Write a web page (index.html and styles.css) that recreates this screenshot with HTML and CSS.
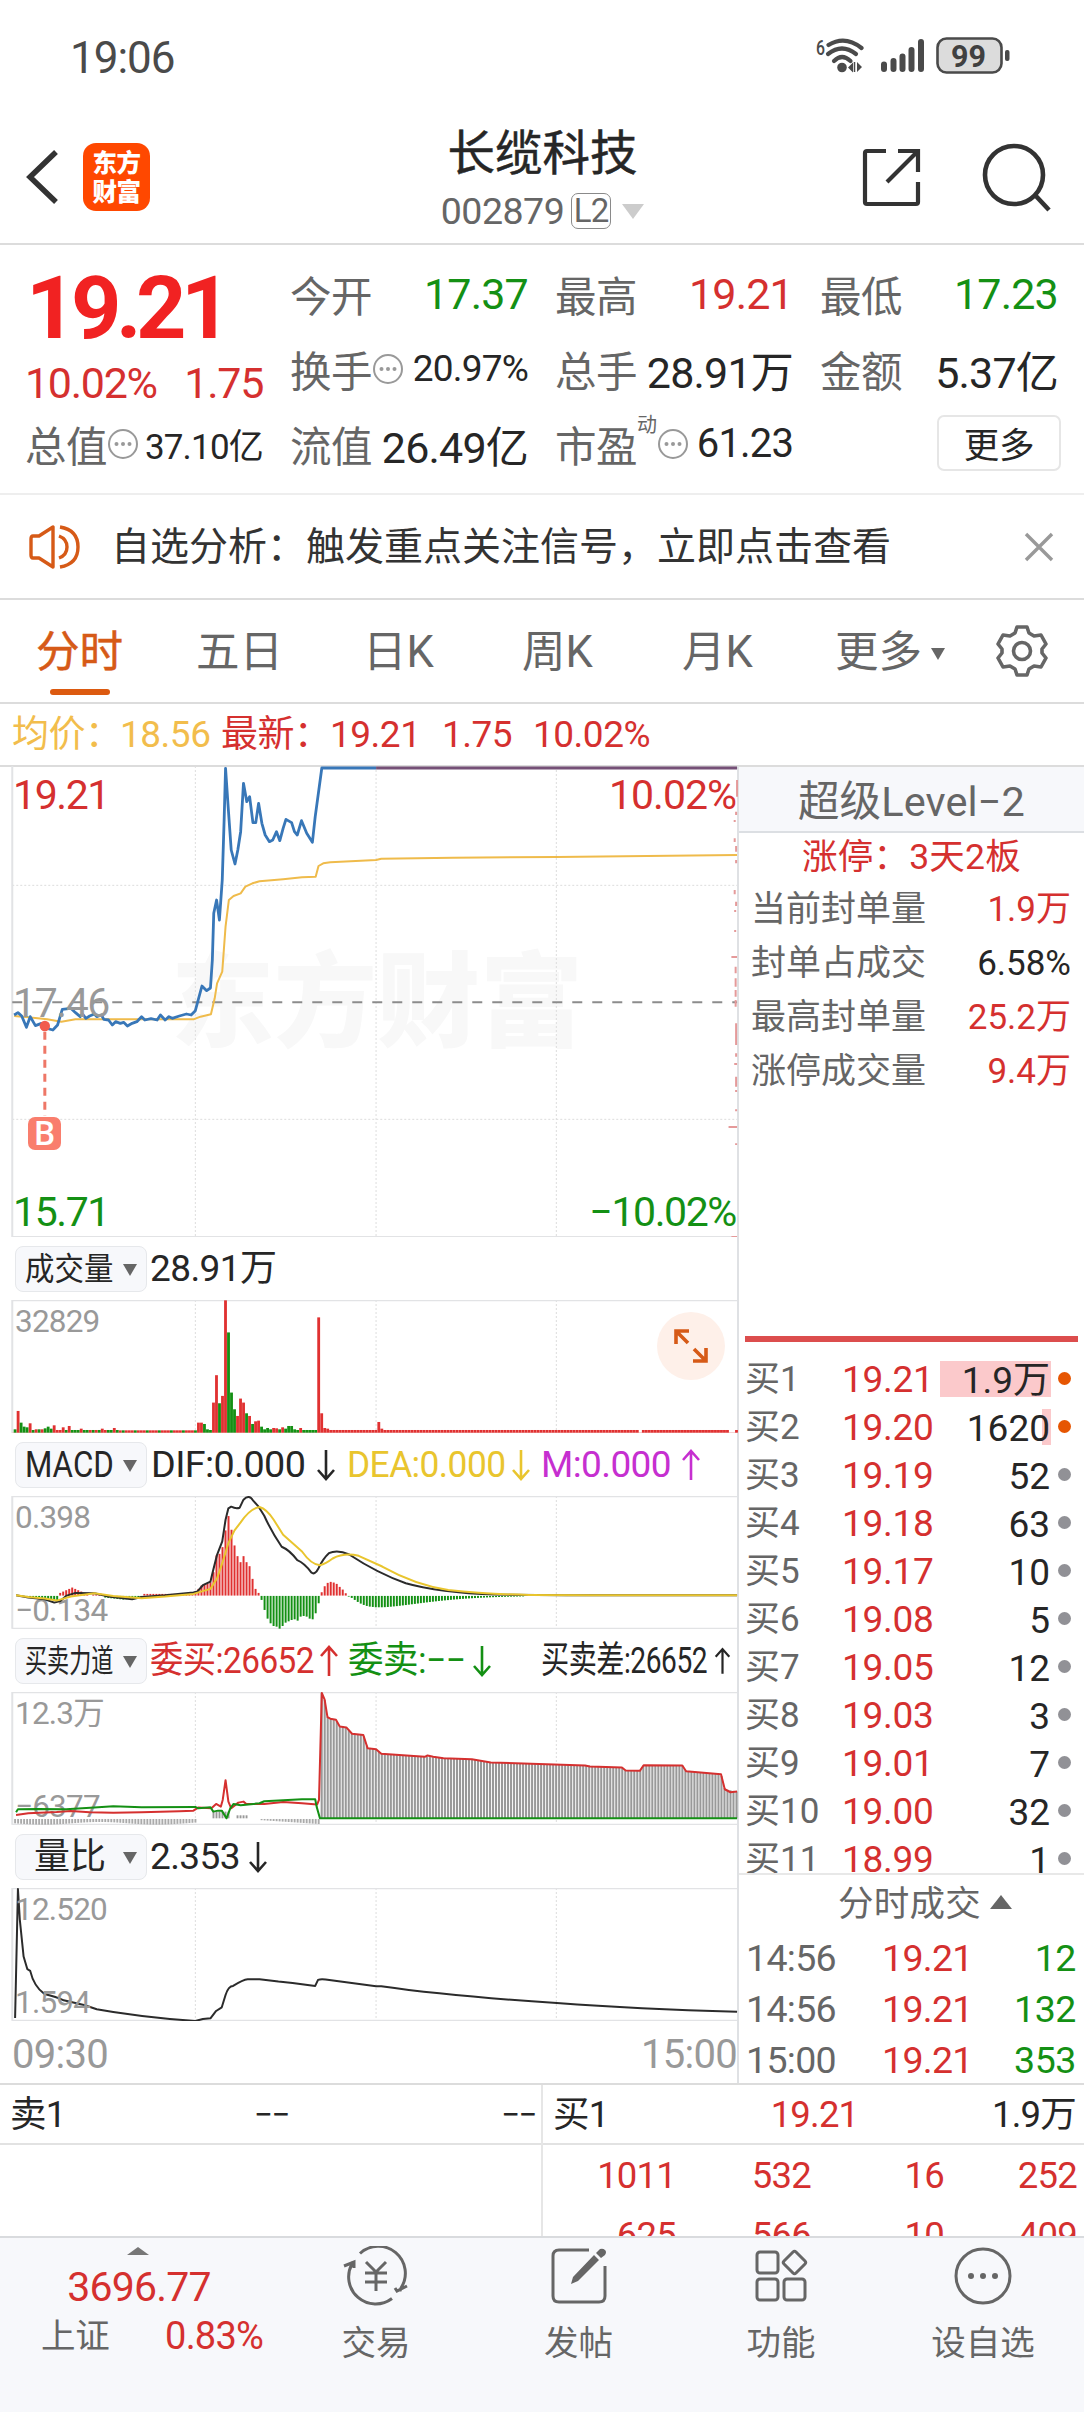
FILE: index.html
```html
<!DOCTYPE html>
<html lang="zh-CN">
<head>
<meta charset="utf-8">
<title>长缆科技 002879</title>
<link rel="stylesheet" href="styles.css">
</head>
<body>
<svg class="defs" width="0" height="0" aria-hidden="true">
  <symbol id="down" viewBox="0 0 20 32"><path d="M10 1V30M2 21L10 30L18 21" fill="none" stroke="currentColor" stroke-width="2.6"/></symbol>
  <symbol id="up" viewBox="0 0 20 32"><path d="M10 31V2M2 11L10 2L18 11" fill="none" stroke="currentColor" stroke-width="2.6"/></symbol>
  <symbol id="info" viewBox="0 0 32 32"><circle cx="16" cy="16" r="14" fill="none" stroke="#999" stroke-width="2"/><g fill="#999"><circle cx="9.5" cy="16" r="2"/><circle cx="16" cy="16" r="2"/><circle cx="22.500" cy="16" r="2"/></g></symbol>
</svg>

<header class="status">
  <span class="clock">19:06</span>
  <svg class="status-icons" width="200" height="44" viewBox="0 0 200 44">
    <text x="2" y="20" font-size="21" font-weight="500" textLength="9" lengthAdjust="spacingAndGlyphs" fill="#4a4a4a">6</text>
    <g fill="none" stroke="#4a4a4a" stroke-width="4.200" stroke-linecap="round">
      <path d="M14.500 10Q31 0 47.500 13"/><path d="M14 19Q28 8 42 19"/><path d="M20 26Q28 18 36.500 26"/>
    </g>
    <circle cx="28" cy="32.500" r="4.800" fill="#4a4a4a"/>
    <path d="M34 32.500l5-5v10zM48 32l-5-5v10z" fill="#4a4a4a"/><path d="M40.500 27v10" stroke="#4a4a4a" stroke-width="1.500"/>
    <g stroke="#4a4a4a" stroke-width="6" stroke-linecap="round"><path d="M70 29.500V34M79.500 26V34M88.500 21.500V34M97.500 15V34M107 7V34"/></g>
    <rect x="123.500" y="3.500" width="64" height="34" rx="9" fill="#dcdcdc" stroke="#4a4a4a" stroke-width="2.600"/>
    <rect x="191" y="15" width="4.500" height="11" rx="2" fill="#4a4a4a"/>
    <text x="137" y="31.500" font-size="31" font-weight="700" textLength="35" lengthAdjust="spacingAndGlyphs" fill="#404040">99</text>
  </svg>
</header>

<nav class="titlebar">
  <svg class="back" width="36" height="60" viewBox="0 0 36 60"><path d="M32 5L6 30L32 55" fill="none" stroke="#333" stroke-width="5.500"/></svg>
  <div class="logo"><span>东方</span><span>财富</span></div>
  <div class="title">
    <h1>长缆科技</h1>
    <div class="code"><span>002879</span><b>L2</b><i></i></div>
  </div>
  <svg class="share" width="60" height="60" viewBox="0 0 60 60"><g fill="none" stroke="#333" stroke-width="4.200"><path d="M24 3H5Q3 3 3 5V54Q3 56 5 56H54Q56 56 56 54V34"/><path d="M36 3H56V24M55 4L25 34"/></g></svg>
  <svg class="search" width="70" height="70" viewBox="0 0 70 70"><g fill="none" stroke="#333" stroke-width="4.600"><circle cx="32" cy="32" r="29"/><path d="M53 52L67 67"/></g></svg>
</nav>

<section class="quote">
  <div class="col c1">
    <strong>19.21</strong>
    <p class="red row2"><span>10.02%</span><span>1.75</span></p>
    <p class="row3"><label>总值</label><svg width="32" height="32"><use href="#info"/></svg><em class="s36">37.10亿</em></p>
  </div>
  <div class="col">
    <p><label>今开</label><em class="green">17.37</em></p>
    <p><label>换手</label><svg width="32" height="32"><use href="#info"/></svg><em class="s37">20.97%</em></p>
    <p><label>流值</label><em>26.49亿</em></p>
  </div>
  <div class="col">
    <p><label>最高</label><em class="red">19.21</em></p>
    <p><label>总手</label><em>28.91万</em></p>
    <p class="pe"><label>市盈</label><sup>动</sup><svg width="32" height="32"><use href="#info"/></svg><em class="s40">61.23</em></p>
  </div>
  <div class="col">
    <p><label>最低</label><em class="green">17.23</em></p>
    <p><label>金额</label><em>5.37亿</em></p>
    <p class="end"><button>更多</button></p>
  </div>
</section>

<section class="notice">
  <svg width="54" height="46" viewBox="0 0 54 46"><g fill="none" stroke="#d65a17" stroke-width="3.400"><path d="M25 3V43L11 34H5Q3 34 3 31V15Q3 12 5 12H11Z" stroke-linejoin="round"/><path d="M31 12Q39 15 39 23T31 34"/><path d="M32 3Q50 6 50 23T32 43"/></g></svg>
  <span>自选分析：触发重点关注信号，立即点击查看</span>
  <svg class="close" width="30" height="30" viewBox="0 0 30 30"><path d="M2 2L28 28M28 2L2 28" stroke="#999" stroke-width="3.400"/></svg>
</section>

<nav class="tabs">
  <span class="on">分时</span><span>五日</span><span>日K</span><span>周K</span><span>月K</span><span>更多<i></i></span>
  <svg width="54" height="54" viewBox="0 0 54 54"><g fill="none" stroke="#666" stroke-width="3.600" stroke-linejoin="round"><path d="M22 3H32L34 9L39 12L46 11L51 20L47 25V29L51 34L46 43L39 42L34 45L32 51H22L20 45L15 42L8 43L3 34L7 29V25L3 20L8 11L15 12L20 9Z"/><circle cx="27" cy="27" r="8.500"/></g></svg>
</nav>

<section class="last">
  <span class="avg">均价：</span><span class="avg n1">18.56</span><span class="red n2">最新：</span><span class="red n3">19.21</span><span class="red n4">1.75</span><span class="red n5">10.02%</span>
</section>

<main class="board">
  <div class="charts">
    <div class="chart price">
      <div class="watermark">东方财富</div>
      <svg width="738" height="471" viewBox="0 18 1564 1413" preserveAspectRatio="none">
        <g class="grid"><path d="M414 18V1431M797 18V1431M1179 18V1431M26 376H1562M26 1078H1562"/></g>
        <path class="frame" d="M26 18V1431H1562"/>
        <path class="line dash" d="M26 727H1562"/>
        <polyline class="line yellow" points="30,768 60,772 100,778 130,785 160,778 410,778 425,770 447,763 455,715 460,670 471,635 478,500 485,420 495,408 510,400 520,380 535,370 550,364 600,358 640,352 669,350 675,318 685,310 700,307 797,300 808,296 960,293 1180,291 1562,285"/>
        <polyline class="line blue" points="30,765 38,758 46,768 56,802 64,770 75,797 88,790 100,805 112,810 122,795 132,748 150,745 160,758 170,770 175,762 182,775 190,768 200,762 205,770 215,765 220,778 230,780 238,795 245,785 255,790 262,787 270,798 280,790 290,785 300,770 307,780 320,776 333,780 340,765 350,780 358,770 365,775 380,768 395,762 405,765 414,752 420,720 428,678 438,692 446,684 450,600 453,460 459,420 465,480 471,360 475,180 478,25 484,150 490,270 498,312 504,270 510,215 516,70 523,125 529,110 536,188 542,188 548,130 555,190 562,225 571,245 578,240 586,215 593,242 600,205 606,178 618,188 624,215 630,225 639,182 650,220 662,247 668,170 682,24 797,24"/>
        <path class="line purple" d="M797 24H1562"/>
        <path class="line tick" d="M1562 60V110M1560 155V165M1557 180V186M1557 235V246M1560 258V275M1560 300V310M1557 390V403M1560 425V438M1558 450V456M1558 510V516M1550 591H1562M1559 620V640M1559 655V680M1559 690V710M1559 720V740M1560 790V855M1560 880V890M1556 912H1562M1560 950V980M1560 990V996M1560 1048V1054M1544 1101H1562M1560 1150V1155M1550 1431H1562"/>
        <path class="line buy" d="M95 815V1068"/>
        <ellipse cx="95" cy="798" rx="11" ry="16" fill="#f15b4e"/>
      </svg>
      <span class="lb red tl">19.21</span><span class="lb red tr">10.02%</span>
      <span class="lb mid">17.46</span>
      <span class="lb green bl">15.71</span><span class="lb green br">−10.02%</span>
      <span class="buy-tag">B</span>
    </div>

    <div class="strip"><button><span class="nm w92">成交量</span><i></i></button><span class="val">28.91万</span></div>
    <div class="chart sub">
      <svg width="738" height="133" viewBox="0 211 1564 398" preserveAspectRatio="none">
        <path class="grid" d="M414 211V609M797 211V609M1179 211V609"/><path class="frame" d="M26 609V212H1562"/><path class="line base" d="M26 608H1562"/>
        <g id="volume"></g>
      </svg>
      <span class="lb g t">32829</span>
      <svg class="expand" width="68" height="68" viewBox="0 0 68 68"><circle cx="34" cy="34" r="34" fill="#fef0e9"/><g fill="none" stroke="#d65a17" stroke-width="3.600"><path d="M19 32V19H32M20 20L31 31"/><path d="M49 36V49H36M48 48L37 37"/></g></svg>
    </div>

    <div class="strip"><button><span class="nm mc">MACD</span><i></i></button><span class="val v-dif">DIF:0.000</span><svg class="ar"><use href="#down"/></svg><span class="val v-dea">DEA:0.000</span><svg class="ar dea"><use href="#down"/></svg><span class="val v-m">M:0.000</span><svg class="ar m"><use href="#up"/></svg></div>
    <div class="chart sub">
      <span class="lb g t">0.398</span><span class="lb g b">−0.134</span>
      <svg width="738" height="133" viewBox="0 799 1564 398" preserveAspectRatio="none">
        <path class="grid" d="M414 799V1197M797 799V1197M1179 799V1197"/><path class="frame" d="M26 1196V800H1562M26 1196H1562"/>
        <g id="macd"></g>
        <path class="line black" d="M34 1096L60 1103L95 1108L115 1118L128 1113L140 1098L160 1089L200 1090L230 1100L280 1108L300 1101L350 1096L410 1088L418 1085L430 1066L446 1055L452 1020L460 975L471 935L478 870L484 836L490 831Q500 838 508 834L516 810Q528 793 536 812L548 831L560 858Q575 905 597 951Q613 960 630 991Q645 1000 660 1028Q667 1037 675 1015Q685 985 697 970Q715 958 740 974Q800 1030 860 1060Q930 1088 1050 1094L1200 1096H1562"/>
        <path class="line gold" d="M34 1096L60 1101L95 1106L120 1112L150 1100L200 1090L240 1098L300 1105L350 1100L410 1092L446 1077L460 1045L471 1000L484 940L497 902L510 878Q530 836 550 832Q565 838 580 870L600 915L640 965Q660 1005 678 1006Q690 1002 705 986Q730 968 760 978L810 1010Q880 1065 950 1080Q1030 1093 1120 1095L1250 1096H1562"/>
      </svg>
    </div>

    <div class="strip"><button><span class="nm w70">买卖力道</span><i></i></button><span class="val red v-buy">委买:26652</span><svg class="ar red"><use href="#up"/></svg><span class="val green v-sell">委卖:−−</span><svg class="ar green"><use href="#down"/></svg><span class="val v-diff">买卖差:26652</span><svg class="ar last-ar"><use href="#up"/></svg></div>
    <div class="chart sub">
      <span class="lb g t">12.3万</span><span class="lb g b">−6377</span>
      <svg width="738" height="133" viewBox="0 217 1564 398" preserveAspectRatio="none">
        <path class="grid" d="M414 217V615M797 217V615M1179 217V615"/><path class="frame" d="M26 614V218H1562M26 614H1562"/>
        <g id="power"></g>
        <polyline class="line red2" points="34,585 60,580 120,576 150,573 190,577 240,578 300,577 380,574 410,572 420,563 448,565 458,552 468,560 472,540 478,481 484,545 490,565 505,548 516,545 522,552 560,552 600,546 640,550 672,554 676,540 682,220 688,240 694,292 700,297 712,300 720,320 734,323 746,342 770,346 779,385 797,388 808,402 900,411 906,407 918,411 940,415 1000,418 1040,428 1240,437 1250,440 1318,443 1326,452 1356,453 1364,436 1446,437 1454,454 1528,463 1536,508 1548,517 1562,515"/>
        <polyline class="line green2" points="34,577 38,568 80,567 140,568 200,563 240,559 300,562 414,561 420,565 446,562 452,575 462,572 470,572 480,595 488,565 495,552 510,556 550,550 560,544 600,541 640,538 668,538 671,560 678,595 1562,595"/>
      </svg>
    </div>

    <div class="strip"><button><span class="nm lb2">量比</span><i></i></button><span class="val v-lb">2.353</span><svg class="ar"><use href="#down"/></svg></div>
    <div class="chart sub">
      <svg width="738" height="133" viewBox="0 805 1564 398" preserveAspectRatio="none">
        <path class="grid" d="M414 805V1203M797 805V1203M1179 805V1203"/><path class="frame" d="M26 1202V806H1562M26 1202H1562"/>
        <path class="line black" d="M32 1194L38 808L42 900L50 1010L58 1048L64 1053Q72 1100 94 1122Q120 1130 135 1141L180 1156L205 1168L240 1176Q300 1189 360 1197L414 1203L430 1197L446 1195L458 1173L470 1162L478 1125Q484 1098 494 1098Q515 1079 525 1078H550L590 1085L620 1089L668 1098L674 1080Q680 1077 690 1079L797 1099H808Q950 1128 1180 1149Q1350 1167 1562 1175"/>
      </svg>
      <span class="lb g t">12.520</span><span class="lb g b">1.594</span>
    </div>
    <div class="times"><span>09:30</span><span>15:00</span></div>
  </div>

  <aside class="side">
    <h2>超级Level−2</h2>
    <div class="limit">涨停：3天2板</div>
    <dl>
      <dt>当前封单量</dt><dd class="red">1.9万</dd>
      <dt>封单占成交</dt><dd>6.58%</dd>
      <dt>最高封单量</dt><dd class="red">25.2万</dd>
      <dt>涨停成交量</dt><dd class="red">9.4万</dd>
    </dl>
    <ul class="bids">
      <li><span>买1</span><b>19.21</b><em class="fill1">1.9万</em><i class="hot"></i></li>
      <li><span>买2</span><b>19.20</b><em class="fill2">1620</em><i class="hot"></i></li>
      <li><span>买3</span><b>19.19</b><em>52</em><i></i></li>
      <li><span>买4</span><b>19.18</b><em>63</em><i></i></li>
      <li><span>买5</span><b>19.17</b><em>10</em><i></i></li>
      <li><span>买6</span><b>19.08</b><em>5</em><i></i></li>
      <li><span>买7</span><b>19.05</b><em>12</em><i></i></li>
      <li><span>买8</span><b>19.03</b><em>3</em><i></i></li>
      <li><span>买9</span><b>19.01</b><em>7</em><i></i></li>
      <li><span>买10</span><b>19.00</b><em>32</em><i></i></li>
      <li><span>买11</span><b>18.99</b><em>1</em><i></i></li>
    </ul>
    <div class="deals">
      <h3>分时成交<i></i></h3>
      <p><span>14:56</span><b>19.21</b><em>12</em></p>
      <p><span>14:56</span><b>19.21</b><em>132</em></p>
      <p><span>15:00</span><b>19.21</b><em>353</em></p>
    </div>
  </aside>
</main>

<section class="queue">
  <div class="half">
    <p class="head"><span>卖1</span><span class="c none">−−</span><span class="r none">−−</span></p>
  </div>
  <div class="half">
    <p class="head"><span>买1</span><span class="c red">19.21</span><span class="r">1.9万</span></p>
    <p class="nums"><span>1011</span><span>532</span><span>16</span><span>252</span></p>
    <p class="nums"><span>625</span><span>566</span><span>10</span><span>409</span></p>
  </div>
</section>

<footer class="dock">
  <div class="index"><i></i><b>3696.77</b><p><span>上证</span><em>0.83%</em></p></div>
  <a><svg width="66" height="60" viewBox="0 0 66 60"><g fill="none" stroke="#666" stroke-width="3"><path d="M17 7.500A27 27 0 0 1 58 42L57 45M52 42L54 45L64 40M49 52.500A27 27 0 0 1 9 18L10 16M1 20L11 16V22"/><path d="M23 16L33 26L43 16M33 26V45M22 27H44M22 36H44"/></g></svg><span>交易</span></a>
  <a><svg width="60" height="60" viewBox="0 0 60 60"><path d="M40 4H10Q4 4 4 10V50Q4 56 10 56H50Q56 56 56 50V20" fill="none" stroke="#666" stroke-width="3"/><path d="M22 38L24 31L45 9L50 14L29 35ZM47 7L51 3Q54 2 56 4Q58 6 56 9L52 12Z" fill="#666"/></svg><span>发帖</span></a>
  <a><svg width="60" height="60" viewBox="0 0 60 60"><g fill="none" stroke="#666" stroke-width="3"><rect x="6" y="6" width="21" height="21" rx="3"/><rect x="6" y="33" width="21" height="21" rx="3"/><rect x="33" y="33" width="21" height="21" rx="3"/><path d="M42 6Q43.500 4.500 45 6L54 15Q55.500 16.500 54 18L45 27Q43.500 28.500 42 27L33 18Q31.500 16.500 33 15Z"/></g></svg><span>功能</span></a>
  <a><svg width="60" height="60" viewBox="0 0 60 60"><circle cx="30" cy="30" r="27" fill="none" stroke="#666" stroke-width="3"/><g fill="#666"><circle cx="18" cy="30" r="3"/><circle cx="30" cy="30" r="3"/><circle cx="42" cy="30" r="3"/></g></svg><span>设自选</span></a>
</footer>
<script src="charts.js"></script>
</body>
</html>
```
FILE: styles.css
```css
* { box-sizing: border-box; margin: 0; padding: 0; }
body { width: 1084px; height: 2412px; overflow: hidden; background: #fff; color: #262626; font-family: Roboto, "Noto Sans CJK SC", sans-serif; letter-spacing: -.3px; }
svg { display: block; flex: none; }
em, i, b { font-style: normal; font-weight: 400; }
h1, h2, h3 { font-weight: 400; }
button { font: inherit; letter-spacing: inherit; color: inherit; }
.defs { position: absolute; }
.red { color: #d5302f; }
.green { color: #149014; }

.status { height: 115px; padding: 35px 70px 0 70px; display: flex; justify-content: space-between; }
.clock { font-size: 44px; line-height: 46px; color: #4a4a4a; letter-spacing: -1px; }
.status-icons { letter-spacing: 0; }

.titlebar { height: 130px; border-bottom: 2px solid #dcdcdc; display: grid; grid-template-columns: 83px 67px 1fr 121px 70px; padding-right: 33px; align-items: start; }
.back { margin: 32px 0 0 24px; }
.logo { margin-top: 28px; width: 67px; height: 68px; border-radius: 13px; background: #ff4800; color: #fff; display: flex; flex-direction: column; justify-content: center; align-items: center; font: 900 24.500px/29px "Noto Sans CJK SC", sans-serif; letter-spacing: -.5px; padding-bottom: 2px; }
.title { display: flex; flex-direction: column; align-items: center; padding: 12px 0 0 75px; }
.title h1 { font-size: 47.500px; line-height: 54px; letter-spacing: 0; -webkit-text-stroke: .5px #262626; }
.code { display: flex; align-items: center; font-size: 37.500px; line-height: 42px; color: #666; letter-spacing: -.8px; margin-top: 9px; }
.code span { letter-spacing: -.5px; }
.code b { border: 1.500px solid #8a8a8a; border-radius: 7px; width: 40px; height: 36px; line-height: 33px; font-size: 33px; text-align: center; margin-left: 7px; }
.code i { border: 11px solid transparent; border-top: 15px solid #ccc; border-bottom: 0; margin-left: 11px; }
.share { margin: 33px 0 0 2px; }
.search { margin: 28px 0 0 1px; }

.quote { height: 250px; border-bottom: 2px solid #eee; display: grid; grid-template-columns: repeat(4, 238px); column-gap: 27px; padding-left: 25px; }
.col { display: flex; flex-direction: column; padding-top: 11px; }
.col p { height: 75px; display: flex; align-items: center; font-size: 43px; }
.col p em { margin-left: auto; letter-spacing: -.8px; white-space: nowrap; }
.col label { font-size: 41.500px; color: #666; letter-spacing: -.5px; white-space: nowrap; }
.col .s36 { font-size: 35px; } .col .s37 { font-size: 37px; } .col .s40 { font-size: 40px; margin-left: 8px; }
.c1 strong { font-size: 88px; line-height: 96px; color: #f12222; letter-spacing: -5.500px; height: 104px; padding-left: 1px; padding-top: 4px; }
.c1 .row2 { height: 46px; justify-content: space-between; letter-spacing: -1.300px; }
.c1 .row2 span { line-height: 44px; }
.c1 p.row3 { height: 75px; }
.pe sup { font-size: 20px; align-self: flex-start; margin-top: 7px; color: #666; line-height: 24px; }
.end { justify-content: flex-end; }
.end button { width: 124px; height: 56px; border: 2px solid #e6e6e6; border-radius: 7px; background: #fff; font-size: 35.500px; margin: -2px -3px 0 0; }

.notice { height: 105px; border-bottom: 2px solid #dcdcdc; display: flex; align-items: center; padding: 0 30px 0 28px; }
.notice span { font-size: 39px; letter-spacing: 0; margin-left: 29px; color: #333; line-height: 54px; }
.notice .close { margin-left: auto; }

.tabs { height: 104px; border-bottom: 2px solid #dcdcdc; display: grid; grid-template-columns: 160px 167px 159px 160px 153px 160px 54px; padding-left: 36px; align-items: center; color: #666; font-size: 43.500px; letter-spacing: 0; }
.tabs span { position: relative; top: 2px; line-height: 60px; white-space: nowrap; }
.tabs .on { color: #d65a17; -webkit-text-stroke: .5px #d65a17; }
.tabs .on::after { content: ""; position: absolute; left: 14px; bottom: -12px; width: 60px; height: 6px; border-radius: 3px; background: #dc5a10; }
.tabs i { display: inline-block; border: 7px solid transparent; border-top: 12px solid #666; border-bottom: 0; margin-left: 9px; vertical-align: 7px; }

.last { height: 63px; border-bottom: 2px solid #dcdcdc; display: grid; grid-template-columns: 108px 101px 109px 112px 91px 1fr; padding: 1px 0 0 12px; align-items: center; font-size: 37px; white-space: nowrap; letter-spacing: -.5px; }
.avg { color: #f2bd4c; }
.last span { line-height: 50px; }

.board { display: grid; grid-template-columns: 739px 345px; height: 1318px; border-bottom: 2px solid #dcdcdc; }
.charts { border-right: 2px solid #dfe1e4; min-width: 0; height: 1317px; margin-top: -1px; }
.chart { position: relative; }
.chart svg { position: relative; }
.price { height: 471px; }
.grid path, path.grid { fill: none; stroke: #ddd; stroke-width: 1; stroke-dasharray: 2 2; vector-effect: non-scaling-stroke; }
.frame { fill: none; stroke: #e2e3e5; stroke-width: 2; vector-effect: non-scaling-stroke; }
.line { fill: none; vector-effect: non-scaling-stroke; stroke-linejoin: round; stroke-width: 2; }
.dash { stroke: #8c8c8c; stroke-dasharray: 10 10; }
.yellow { stroke: #efbb4b; }
.blue { stroke: #3877b8; stroke-width: 2.800; }
.purple { stroke: #755077; stroke-width: 2.800; }
.tick { stroke: #e59a9a; stroke-width: 2; }
.buy { stroke: #ee7767; stroke-width: 3; stroke-dasharray: 8 6; }
.base { stroke: #f3c9c9; stroke-width: 1; }
.black { stroke: #2b2b2b; }
.gold { stroke: #e9c52e; }
.red2 { stroke: #d5302f; }
.green2 { stroke: #149014; }
.watermark { position: absolute; left: 171px; top: 169px; font: 900 103px/120px "Noto Sans CJK SC", sans-serif; letter-spacing: 0; color: #f8f8f8; }
.lb { position: absolute; font-size: 41px; line-height: 44px; letter-spacing: -1.400px; }
.tl { left: 13px; top: 7px; } .tr { right: 1px; top: 7px; letter-spacing: -1px; }
.bl { left: 13px; bottom: 3px; } .br { right: 1px; bottom: 3px; }
.mid { left: 13px; top: 215px; color: #999; }
.buy-tag { position: absolute; left: 28px; top: 351px; width: 33px; height: 33px; border-radius: 7px; background: #f97e6d; color: #fff; text-align: center; font-size: 33px; font-weight: 500; line-height: 34px; }
.strip { height: 63px; display: flex; align-items: center; padding-left: 15px; white-space: nowrap; }
.strip button { width: 132px; height: 46px; flex: none; border: 1.500px solid #e6e8eb; border-radius: 8px; background: #f7f8fb; position: relative; display: flex; align-items: center; padding-left: 9px; }
.strip button i { position: absolute; right: 9px; top: 17px; border: 7px solid transparent; border-top: 12px solid #666; border-bottom: 0; }
.nm { font-size: 32px; transform-origin: left; letter-spacing: 0; line-height: 40px; }
.w92 { transform: scaleX(.92); } .w70 { transform: scaleX(.69); }
.mc { font-size: 36px; transform: scaleX(.87); }
.lb2 { font-size: 36px; margin-left: 9px; }
.val { font-size: 37px; margin-left: 3px; line-height: 44px; flex: none; transform-origin: left; letter-spacing: -.6px; }
.ar { width: 20px; height: 32px; }
.dea, .v-dea { color: #e9c52e; }
.m, .v-m { color: #c62fd0; }
.v-dif { width: 165px; margin-left: 4px; transform: scaleX(1.02); } .v-dea { width: 164px; margin-left: 11px; transform: scaleX(.955); } .v-m { width: 140px; margin-left: 10px; }
.v-buy { width: 169px; transform: scaleX(.9); } .v-sell { width: 124px; margin-left: 9px; transform: scaleX(.96); } .v-diff { width: 173px; margin-left: 49px; transform: scaleX(.76); }
.last-ar { width: 17px; }
.v-lb { width: 98px; }
.sub { height: 133px; }
.g { color: #999; font-size: 31.500px; line-height: 34px; letter-spacing: -.8px; }
.t { left: 15px; top: 5px; } .b { left: 15px; bottom: 1px; }
.chart .expand { position: absolute; left: 657px; top: 12px; }
.times { display: flex; justify-content: space-between; padding: 10px 0 0 12px; font-size: 40px; line-height: 48px; color: #999; letter-spacing: -.7px; }

.side { min-width: 0; display: flex; flex-direction: column; height: 1316px; overflow: hidden; }
.side h2 { height: 66px; background: #f7f8fb; border-bottom: 2px solid #dcdfe3; color: #666; font-size: 41.500px; line-height: 69px; text-align: center; letter-spacing: .1px; }
.limit { height: 48px; line-height: 49px; text-align: center; color: #d5302f; font-size: 35.500px; letter-spacing: .2px; }
dl { display: grid; grid-template-columns: 1fr auto; grid-auto-rows: 54px; line-height: 54px; font-size: 35px; height: 461px; border-bottom: 6px solid #dc4d4d; margin: 0 6px; padding: 2px 7px 0 6px; letter-spacing: 0; flex: none; }
dt { color: #666; } dd { text-align: right; }
.bids { list-style: none; padding: 14px 13px 0 6px; height: 533px; overflow: hidden; border-bottom: 2px solid #e8e8e8; flex: none; }
.bids li { height: 48px; display: grid; grid-template-columns: 97px 96px 1fr 20px; align-items: center; font-size: 37px; line-height: 48px; white-space: nowrap; }
.bids span { font-size: 35px; letter-spacing: 0; }
.bids span, .deals span { color: #666; }
.bids b { color: #d5302f; letter-spacing: -.3px; }
.bids em { text-align: right; height: 36px; line-height: 39px; padding-right: 1px; margin-left: 2px; letter-spacing: 0; margin-top: -3px; }
.fill1 { background: #fbc9cb; }
.fill2 { background: linear-gradient(#fbc9cb, #fbc9cb) right / 9px 100% no-repeat; }
.bids i { width: 13px; height: 13px; border-radius: 50%; background: #919196; margin-left: 7px; margin-top: -3px; }
.bids i.hot { background: #e65602; }
.deals { padding: 0 8px 0 7px; }
.deals h3 { height: 58px; line-height: 59px; font-size: 35.500px; color: #666; text-align: center; letter-spacing: .2px; padding-left: 28px; }
.deals h3 i { display: inline-block; border: 11px solid transparent; border-bottom: 14px solid #666; border-top: 0; margin-left: 9px; vertical-align: 7px; }
.deals p { height: 51px; line-height: 51px; display: grid; grid-template-columns: 136px 1fr auto; font-size: 37.500px; letter-spacing: -.7px; }
.deals b { color: #d5302f; } .deals em { color: #149014; letter-spacing: -.4px; }

.queue { height: 151px; display: grid; grid-template-columns: 543px 541px; overflow: hidden; }
.half { height: 151px; overflow: hidden; }
.half:first-child { border-right: 2px solid #e6e6e6; }
.half p { height: 60px; font-size: 36.500px; display: grid; letter-spacing: -.8px; }
.half .head { border-bottom: 2px solid #e2e2e2; grid-template-columns: 1fr 1fr 1fr; padding: 0 8px 0 10px; line-height: 60px; }
.half .c { text-align: center; } .half .r { text-align: right; }
.half .none { font-size: 33px; letter-spacing: -1.500px; }
.half .none.r { margin-right: -3px; }
.half .nums { grid-template-columns: 133px 135px 133px 133px; text-align: right; color: #d5302f; line-height: 61px; }

.dock { height: 176px; background: #f7f8fb; border-top: 2px solid #d9dbde; display: grid; grid-template-columns: 275px 202px 203px 202px 202px; color: #666; }
.dock a { display: flex; flex-direction: column; align-items: center; padding-top: 8px; font-size: 34.500px; letter-spacing: 0; }
.dock a span { line-height: 50px; margin-top: 12px; }
.index { text-align: center; padding-top: 9px; }
.index i { display: block; width: 22px; border: 11px solid transparent; border-bottom: 8px solid #777; border-top: 0; margin-left: 127px; }
.index b { display: block; font-size: 41px; line-height: 48px; margin-top: 8px; color: #d5302f; letter-spacing: -.8px; padding-left: 3px; }
.index p { display: flex; justify-content: space-between; padding: 0 12px 0 41px; line-height: 51px; font-size: 34.500px; }
.index em { color: #d5302f; font-size: 38px; letter-spacing: -.8px; }
```
FILE: charts.js
```js
const NS = "http://www.w3.org/2000/svg";
const STEP = 6.37;
const RED = "#e03131";
const GREEN = "#149014";

function bar(group, i, top, height, color, width) {
  const r = document.createElementNS(NS, "rect");
  r.setAttribute("x", (32 + i * STEP - width / 2).toFixed(2));
  r.setAttribute("y", top);
  r.setAttribute("width", width);
  r.setAttribute("height", height);
  r.setAttribute("fill", color);
  group.appendChild(r);
}

// Turnover per minute: positive values are up minutes, negative are down minutes.
const volume = document.getElementById("volume");
const head = [-10, 65, -30, -18, -16, 28, -8, 10, -10, 10, -13, -18, -12, 22, 8, 8, 16, -8, 20, -8, -8, -8, 12, -8, -8, 8, -8, 8, -8, 12, 8, -8, -8, 14, -8];
const burst = [30, 30, -26, -10, -8, 90, 172, -88, 110, 396, -300, -120, -70, 50, 102, 90, -58, 50, -26, 34, 36, -18, -10, -14, -10, 14, 13, -10, 16, -12, -20, -20, -10, -8, 14, -8, -8, -8, -8, -8, 345, 58, 14, 12];
for (let i = 0; i <= 240; i++) {
  if (i === 208 || i === 238 || i === 239) continue;
  let v = i < head.length ? head[i] : i < 61 ? (i % 4 ? 7 : -7) : i < 61 + burst.length ? burst[i - 61] : 8;
  if (i === 121) v = 32;
  if (i === 122) v = 12;
  bar(volume, i, 608 - Math.abs(v), Math.abs(v), v > 0 ? RED : GREEN, 6);
}

const macd = document.getElementById("macd");
const peak = [10, 20, 30, 34, 36, 40, 70, 120, 125, 145, 195, 238, 197, 150, 118, 100, 118, 100, 88, 50, 20, 8, -12, -42, -68, -82, -90, -92, -98, -90, -80, -76, -72, -70, -74, -62, -60, -62, -68, -70, -52, -22, 10, 28, 38, 41, 39, 35, 26, 18, 7, -2, -6, -12, -18, -23, -27, -30, -32, -33, -34, -34, -34];
for (let i = 2; i < 170; i++) {
  let v;
  if (i < 15) v = -Math.min(12, i);
  else if (i < 26) v = 24 - Math.abs(i - 19) * 4;
  else if (i < 30) v = 3;
  else if (i < 43) v = -11 + Math.abs(i - 36);
  else if (i < 60) v = 5;
  else if (i < 60 + peak.length) v = peak[i - 60];
  else v = -34 * Math.exp(-Math.pow((i - 122) / 22, 1.5));
  bar(macd, i, v > 0 ? 1097 - v : 1098, Math.abs(v), v > 0 ? RED : GREEN, 4.2);
}

const power = document.getElementById("power");
const curve = [[682, 220], [688, 240], [694, 292], [712, 300], [720, 320], [734, 323], [746, 342], [770, 346], [779, 385], [797, 388], [808, 402], [900, 411], [1000, 418], [1040, 428], [1240, 437], [1318, 443], [1326, 452], [1356, 453], [1364, 436], [1446, 437], [1454, 454], [1528, 463], [1536, 508], [1570, 517]];
function curveY(x) {
  for (let k = 1; k < curve.length; k++) {
    if (x <= curve[k][0]) {
      const [x0, y0] = curve[k - 1];
      const [x1, y1] = curve[k];
      return y0 + (y1 - y0) * (x - x0) / (x1 - x0);
    }
  }
  return 517;
}
for (let i = 0; i <= 240; i++) {
  const x = 32 + i * STEP;
  if (i >= 102) bar(power, i, curveY(x), 595 - curveY(x), "#999", 4.4);
  else if (i < 61) bar(power, i, 597, 13 + 4 * Math.sin(i / 6), "#aaa", 4);
  else if (i >= 66 && i < 72) bar(power, i, 575, 20, "#999", 4);
  else if (i >= 74 && i < 78) bar(power, i, 586, 9, "#999", 4);
  else if (i > 81) bar(power, i, 597, 3 + (i - 81) * .6, "#aaa", 4);
}
```
